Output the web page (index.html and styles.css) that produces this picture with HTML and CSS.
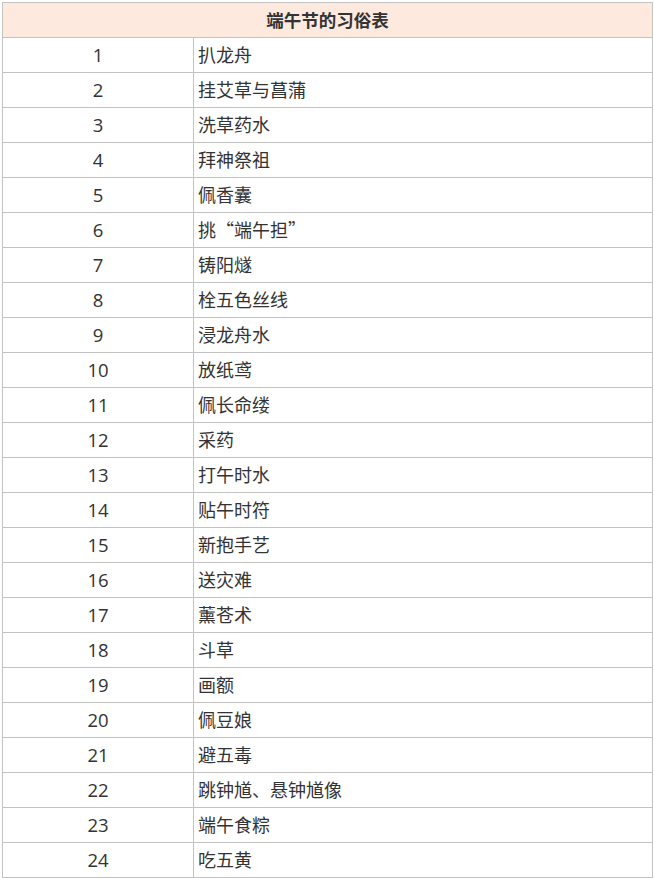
FILE: index.html
```html
<!DOCTYPE html>
<html lang="zh-CN">
<head>
<meta charset="utf-8">
<title>端午节的习俗表</title>
<link rel="stylesheet" href="styles.css">
</head>
<body>
<div class="page">
<table class="customs">
<colgroup>
<col class="col-num">
<col class="col-name">
</colgroup>
<thead>
<tr><th colspan="2">端午节的习俗表</th></tr>
</thead>
<tbody>
<tr><td class="num">1</td><td class="name">扒龙舟</td></tr>
<tr><td class="num">2</td><td class="name">挂艾草与菖蒲</td></tr>
<tr><td class="num">3</td><td class="name">洗草药水</td></tr>
<tr><td class="num">4</td><td class="name">拜神祭祖</td></tr>
<tr><td class="num">5</td><td class="name">佩香囊</td></tr>
<tr><td class="num">6</td><td class="name">挑“端午担”</td></tr>
<tr><td class="num">7</td><td class="name">铸阳燧</td></tr>
<tr><td class="num">8</td><td class="name">栓五色丝线</td></tr>
<tr><td class="num">9</td><td class="name">浸龙舟水</td></tr>
<tr><td class="num">10</td><td class="name">放纸鸢</td></tr>
<tr><td class="num">11</td><td class="name">佩长命缕</td></tr>
<tr><td class="num">12</td><td class="name">采药</td></tr>
<tr><td class="num">13</td><td class="name">打午时水</td></tr>
<tr><td class="num">14</td><td class="name">贴午时符</td></tr>
<tr><td class="num">15</td><td class="name">新抱手艺</td></tr>
<tr><td class="num">16</td><td class="name">送灾难</td></tr>
<tr><td class="num">17</td><td class="name">薰苍术</td></tr>
<tr><td class="num">18</td><td class="name">斗草</td></tr>
<tr><td class="num">19</td><td class="name">画额</td></tr>
<tr><td class="num">20</td><td class="name">佩豆娘</td></tr>
<tr><td class="num">21</td><td class="name">避五毒</td></tr>
<tr><td class="num">22</td><td class="name">跳钟馗、悬钟馗像</td></tr>
<tr><td class="num">23</td><td class="name">端午食粽</td></tr>
<tr><td class="num">24</td><td class="name">吃五黄</td></tr>
</tbody>
</table>
</div>
</body>
</html>
```
FILE: styles.css
```css
html, body {
  margin: 0;
  padding: 0;
  background: #ffffff;
}
.page {
  padding: 2px;
}
.customs {
  width: 651px;
  border-collapse: collapse;
  table-layout: fixed;
  font-family: "Open Sans", "Noto Sans CJK SC", sans-serif;
  color: #333333;
}
.col-num {
  width: 191px;
}
.customs th,
.customs td {
  border: 1px solid #c3c3c3;
  height: 35px;
  padding: 0 0 2px 0;
  box-sizing: border-box;
}
.customs th {
  background: #fde9dd;
  font-family: "Noto Sans CJK SC", sans-serif;
  font-weight: bold;
  font-size: 17.5px;
  color: #333333;
  text-align: center;
}
.customs td {
  font-size: 18px;
}
.customs .num {
  text-align: center;
  font-size: 18.5px;
}
.customs .name {
  text-align: left;
  padding-left: 4px;
  font-family: "Noto Sans CJK SC", sans-serif;
}
```
